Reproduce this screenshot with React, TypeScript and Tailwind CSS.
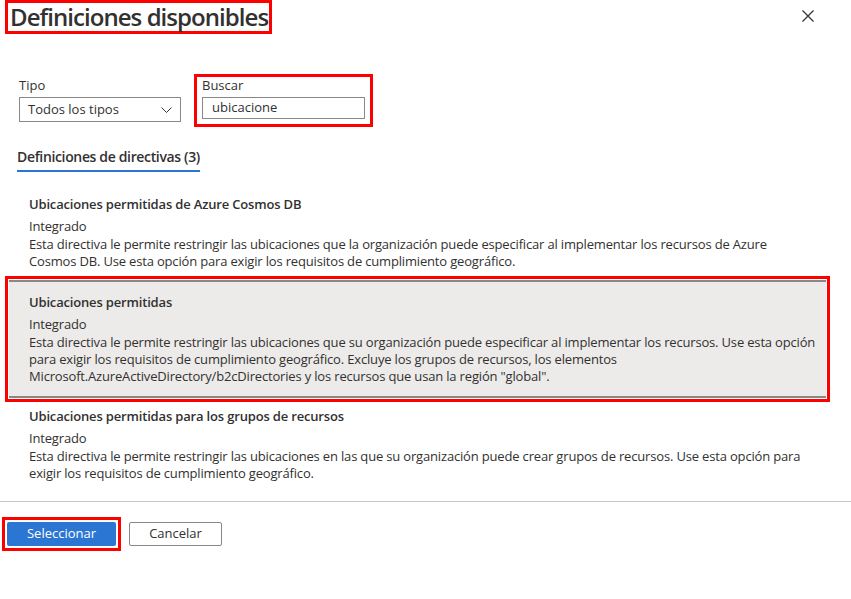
import React from "react";

const items = [
  {
    title: "Ubicaciones permitidas de Azure Cosmos DB",
    lines: [
      "Esta directiva le permite restringir las ubicaciones que la organización puede especificar al implementar los recursos de Azure",
      "Cosmos DB. Use esta opción para exigir los requisitos de cumplimiento geográfico.",
    ],
  },
  {
    title: "Ubicaciones permitidas",
    lines: [
      "Esta directiva le permite restringir las ubicaciones que su organización puede especificar al implementar los recursos. Use esta opción",
      "para exigir los requisitos de cumplimiento geográfico. Excluye los grupos de recursos, los elementos",
      'Microsoft.AzureActiveDirectory/b2cDirectories y los recursos que usan la región "global".',
    ],
  },
  {
    title: "Ubicaciones permitidas para los grupos de recursos",
    lines: [
      "Esta directiva le permite restringir las ubicaciones en las que su organización puede crear grupos de recursos. Use esta opción para",
      "exigir los requisitos de cumplimiento geográfico.",
    ],
  },
];

function Item({ title, lines }: { title: string; lines: string[] }) {
  return (
    <div className="tracking-[-0.17px]">
      <div className="text-[13px] leading-[20px] font-semibold">{title}</div>
      <div className="mt-[2px] text-[13px] leading-[20px]">Integrado</div>
      <div className="text-[13px] leading-[17px]">
        {lines.map((l) => (
          <div key={l} className="whitespace-nowrap">
            {l}
          </div>
        ))}
      </div>
    </div>
  );
}

export default function App() {
  return (
    <div
      className="w-[851px] h-[599px] bg-white text-[#323130] overflow-hidden"
      style={{ fontFamily: '"Open Sans", "Liberation Sans", sans-serif' }}
    >
      {/* Header */}
      <div className="flex items-start justify-between">
        <div className="ml-[5px] h-[34px] border-[3px] border-[#ff0000] pl-[2px] pr-[1px] flex items-center">
          <h1 className="text-[24px] leading-[28px] font-semibold tracking-[-0.95px]">Definiciones disponibles</h1>
        </div>
        <svg className="mt-[10px] mr-[37px]" width="12" height="12" viewBox="0 0 12 12">
          <path d="M0.5 0.5 L11.5 11.5 M11.5 0.5 L0.5 11.5" stroke="#323130" strokeWidth="1.2" />
        </svg>
      </div>

      {/* Filters */}
      <div className="mt-[40px] pl-[19px] flex items-start gap-[13px]">
        <div className="pt-[3px]">
          <div className="text-[13px] leading-[16px]">Tipo</div>
          <div className="mt-[4px] w-[162px] h-[25px] border border-[#8a8886] flex items-center justify-between pl-[8px] pr-[8px]">
            <span className="text-[13px]">Todos los tipos</span>
            <svg width="11" height="6" viewBox="0 0 11 6">
              <path d="M0.5 0.5 L5.5 5.5 L10.5 0.5" fill="none" stroke="#323130" strokeWidth="1" />
            </svg>
          </div>
        </div>
        <div className="border-[3px] border-[#ff0000] px-[5px] pb-[5px]">
          <div className="text-[13px] leading-[16px]">Buscar</div>
          <div className="mt-[4px] w-[163px] h-[22px] border border-[#8a8886] flex items-center pl-[9px]">
            <span className="text-[13px]">ubicacione</span>
          </div>
        </div>
      </div>

      {/* Tab */}
      <div className="ml-[17px] mt-[21px] w-fit border-b-2 border-[#2b76d2] pb-[4px]">
        <div className="text-[14px] leading-[18px] font-semibold tracking-[-0.35px]">Definiciones de directivas (3)</div>
      </div>

      {/* List */}
      <div className="mt-[22px]">
        <div className="pl-[29px]">
          <Item {...items[0]} />
        </div>
        <div className="mt-[6px] ml-[5px] w-[825px] border-[3px] border-[#ff0000] p-[1px]">
          <div className="bg-[#edebe9] border-y-2 border-[#8a8886] pl-[20px] pt-[10px] pb-[11px]">
            <Item {...items[1]} />
          </div>
        </div>
        <div className="mt-[4px] pl-[29px]">
          <Item {...items[2]} />
        </div>
      </div>

      {/* Footer */}
      <div className="mt-[19px] border-t border-[#c8c6c4] pt-[15px] pl-[2px] flex items-center gap-[8px]">
        <div className="border-[3px] border-[#ff0000] p-[2px]">
          <button className="w-[109px] h-[24px] rounded-[2px] bg-[#2b76d2] text-white text-[13px] flex items-center justify-center">
            Seleccionar
          </button>
        </div>
        <button className="w-[93px] h-[24px] rounded-[2px] border border-[#8a8886] bg-white text-[13px] flex items-center justify-center">
          Cancelar
        </button>
      </div>
    </div>
  );
}
